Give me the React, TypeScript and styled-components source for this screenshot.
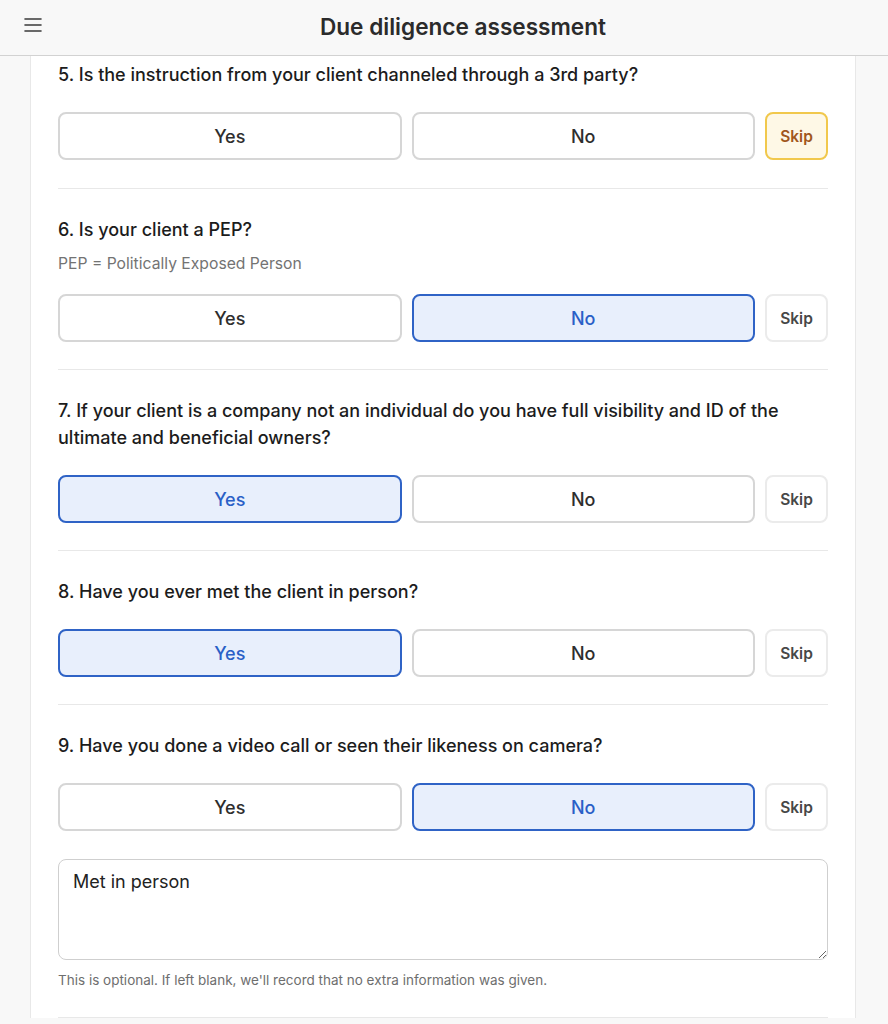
import styled, { createGlobalStyle, css } from "styled-components";

const GlobalStyle = createGlobalStyle`
	html, body {
		margin: 0;
		padding: 0;
		background: #f8f8f8;
		font-family: Inter, "Noto Sans", sans-serif;
		color: #1f1f1f;
	}
	* {
		box-sizing: border-box;
	}
`;

type Answer = "yes" | "no" | "skip" | null;

type Question = {
	id: number;
	text: string;
	hint?: string;
	answer: Answer;
	note?: string;
};

const questions: Question[] = [
	{ id: 5, text: "Is the instruction from your client channeled through a 3rd party?", answer: "skip" },
	{ id: 6, text: "Is your client a PEP?", hint: "PEP = Politically Exposed Person", answer: "no" },
	{
		id: 7,
		text: "If your client is a company not an individual do you have full visibility and ID of the ultimate and beneficial owners?",
		answer: "yes",
	},
	{ id: 8, text: "Have you ever met the client in person?", answer: "yes" },
	{ id: 9, text: "Have you done a video call or seen their likeness on camera?", answer: "no", note: "Met in person" },
];

const MenuIcon = () => (
	<svg width="18" height="14" viewBox="0 0 18 14" fill="none">
		<path d="M1 1h16M1 7h16M1 13h16" stroke="#3a3a3a" strokeWidth="1.6" strokeLinecap="round" />
	</svg>
);

const App = () => {
	return (
		<>
			<GlobalStyle />
			<Header>
				<MenuButton aria-label="menu">
					<MenuIcon />
				</MenuButton>
				<Title>Due diligence assessment</Title>
			</Header>
			<Main>
				<Card>
					{questions.map((q, i) => (
						<Section key={q.id} $first={i === 0}>
							<QuestionText $hasHint={!!q.hint}>
								{q.id}. {q.text}
							</QuestionText>
							{q.hint && <Hint>{q.hint}</Hint>}
							<Choices>
								<Choice $selected={q.answer === "yes"}>Yes</Choice>
								<Choice $selected={q.answer === "no"}>No</Choice>
								<SkipButton $selected={q.answer === "skip"}>Skip</SkipButton>
							</Choices>
							{q.note !== undefined && (
								<>
									<NoteArea defaultValue={q.note} />
									<NoteHelp>
										This is optional. If left blank, we'll record that no extra information was given.
									</NoteHelp>
								</>
							)}
						</Section>
					))}
				</Card>
			</Main>
		</>
	);
};

export default App;

const Header = styled.header`
	height: 56px;
	padding: 0 0 3px 38px;
	display: flex;
	align-items: center;
	justify-content: center;
	position: relative;
	background: #f8f8f8;
	border-bottom: 1px solid #d2d2d2;
`;

const MenuButton = styled.button`
	position: absolute;
	left: 15px;
	top: 13px;
	width: 36px;
	height: 24px;
	display: flex;
	align-items: center;
	justify-content: center;
	border: none;
	background: none;
	padding: 0;
`;

const Title = styled.h1`
	margin: 0;
	font-size: 22.6px;
	font-weight: 600;
	color: #2b2b2b;
`;

const Main = styled.main`
	padding: 0 32px 0 30px;
`;

const Card = styled.div`
	background: #fff;
	border-left: 1px solid #e8e8e8;
	border-right: 1px solid #e8e8e8;
	padding: 0 27px;
`;

const Section = styled.section<{ $first?: boolean }>`
	padding: ${(p) => (p.$first ? "5px" : "27px")} 0 ${(p) => (p.$first ? "28px" : "27px")};
	border-bottom: 1px solid #e8e8e8;
	display: flex;
	flex-direction: column;
`;

const QuestionText = styled.h2<{ $hasHint?: boolean }>`
	margin: 0 0 ${(p) => (p.$hasHint ? "10px" : "24px")};
	font-size: 18px;
	line-height: 27px;
	font-weight: 500;
	color: #1c1c1c;
`;

const Hint = styled.p`
	margin: 0 0 19px;
	font-size: 15.7px;
	line-height: 22px;
	color: #737373;
`;

const Choices = styled.div`
	display: flex;
	gap: 10px;
`;

const baseButton = css`
	height: 48px;
	border-radius: 8px;
	border: 2px solid #d6d6d6;
	background: #fff;
	font-family: inherit;
	cursor: pointer;
`;

const Choice = styled.button<{ $selected?: boolean }>`
	${baseButton}
	flex: 1;
	font-size: 18px;
	font-weight: 500;
	color: #2e2e2e;
	${(p) =>
		p.$selected &&
		css`
			background: #e8effc;
			border-color: #2f63c6;
			color: #2a5fc7;
		`}
`;

const SkipButton = styled.button<{ $selected?: boolean }>`
	${baseButton}
	width: 63px;
	border-color: #ebebeb;
	font-size: 15.5px;
	font-weight: 600;
	color: #474747;
	${(p) =>
		p.$selected &&
		css`
			background: #fef8e6;
			border-color: #f1c84c;
			color: #a1561c;
		`}
`;

const NoteArea = styled.textarea`
	margin-top: 28px;
	height: 101px;
	width: 100%;
	padding: 11px 14px;
	border: 1px solid #cfcfcf;
	border-radius: 8px;
	font-family: inherit;
	font-size: 18px;
	line-height: 22px;
	color: #222;
	resize: vertical;
`;

const NoteHelp = styled.p`
	margin: 10px 0 0;
	font-size: 13.5px;
	line-height: 20px;
	color: #6e6e6e;
`;
